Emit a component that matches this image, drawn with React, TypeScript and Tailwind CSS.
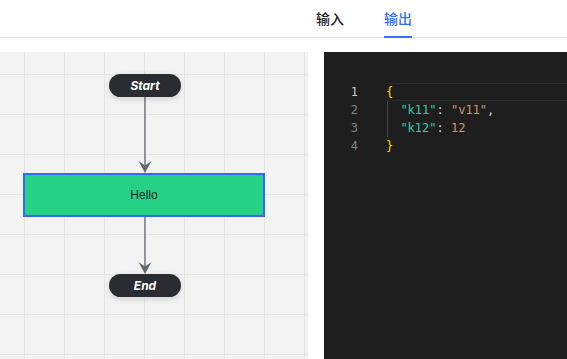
import React from 'react'

const Edge = ({ x, y1, y2 }: { x: number; y1: number; y2: number }) => (
    <g>
        <line x1={x} y1={y1} x2={x} y2={y2 - 6} stroke="#62686f" strokeWidth="1.3" />
        <path
            d={`M${x - 6.5} ${y2 - 12} L${x} ${y2 - 7.5} L${x + 6.5} ${y2 - 12} L${x} ${y2} Z`}
            fill="#62686f"
        />
    </g>
)

const Terminal = ({ label, top }: { label: string; top: number }) => (
    <div
        className="absolute left-[109px] w-[72px] h-[23px] rounded-full bg-[#2b2c31] flex items-center justify-center text-white text-[12px] font-bold italic shadow-[0_2px_6px_rgba(0,0,0,0.15)]"
        style={{ top }}
    >
        {label}
    </div>
)

const FlowCanvas = () => (
    <div className="relative w-[308px] h-[307px] bg-[#f3f3f3] bg-[linear-gradient(to_right,#e4e4e4_1px,transparent_1px),linear-gradient(to_bottom,#e4e4e4_1px,transparent_1px)] bg-[size:40px_40px] bg-[position:24px_22px] overflow-hidden font-['Inter',sans-serif]">
        <svg className="absolute inset-0" width="308" height="307">
            <Edge x={145} y1={45} y2={121} />
            <Edge x={145} y1={165} y2={222} />
        </svg>
        <Terminal label="Start" top={22} />
        <div className="absolute left-[23px] top-[121px] w-[242px] h-[44px] bg-[#25d186] border-2 border-[#3366ff] flex items-center justify-center text-[12px] text-[#1f2329] font-['Liberation_Sans',sans-serif]">
            Hello
        </div>
        <Terminal label="End" top={222} />
    </div>
)

const lines = [
    <span className="text-[#ffd700]">{'{'}</span>,
    <>
        <span className="text-[#3dc9b0]">"k11"</span>
        <span className="text-[#d4d4d4]">: </span>
        <span className="text-[#ce9178]">"v11"</span>
        <span className="text-[#d4d4d4]">,</span>
    </>,
    <>
        <span className="text-[#3dc9b0]">"k12"</span>
        <span className="text-[#d4d4d4]">: </span>
        <span className="text-[#ce9178]">12</span>
    </>,
    <span className="text-[#ffd700]">{'}'}</span>,
]

const Editor = () => (
    <div className="flex-1 h-[307px] bg-[#1e1e1e] pt-[31px] font-['DejaVu_Sans_Mono',monospace] text-[12px]">
        {lines.map((content, i) => (
            <div key={i} className="flex h-[18px] items-center">
                <div
                    className={`w-[34px] text-right ${i === 0 ? 'text-[#c6c6c6]' : 'text-[#858585]'}`}
                >
                    {i + 1}
                </div>
                <div
                    className={`relative ml-[28px] flex-1 h-full flex items-center whitespace-pre ${
                        i === 0 ? 'border-y border-[#2c2c2c]' : ''
                    }`}
                >
                    {(i === 1 || i === 2) && (
                        <>
                            <span className="absolute left-[1px] top-0 bottom-0 w-px bg-[#4a4a4a]" />
                            <span className="pl-[14.4px]" />
                        </>
                    )}
                    {content}
                </div>
            </div>
        ))}
    </div>
)

export default function App() {
    return (
        <div className="w-[567px] h-[359px] bg-white overflow-hidden font-['Noto_Sans_CJK_SC',sans-serif]">
            <div className="h-[38px] border-b border-[#e5e6eb] flex items-stretch pl-[316px] gap-[40px] text-[14px] font-medium">
                <div className="flex items-center text-[#1f2329]">输入</div>
                <div className="relative flex items-center text-[#3370ff]">
                    输出
                    <span className="absolute left-0 right-0 bottom-[-1px] h-[2px] bg-[#3370ff]" />
                </div>
            </div>
            <div className="flex pt-[14px] gap-[16px]">
                <FlowCanvas />
                <Editor />
            </div>
        </div>
    )
}
